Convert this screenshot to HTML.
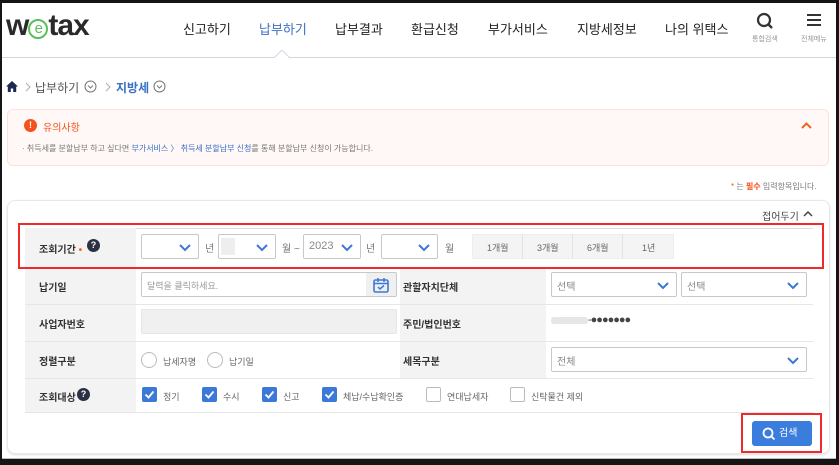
<!DOCTYPE html>
<html><head><meta charset="utf-8">
<style>
*{margin:0;padding:0;box-sizing:border-box}
body{width:839px;height:465px;background:#151515;position:relative;overflow:hidden;font-family:"Liberation Sans","Noto Sans CJK KR",sans-serif;color:#333}
.a{position:absolute}
#pg{left:2px;top:3px;width:834px;height:456px;background:#fff;border-bottom:1px solid #bbb}
.nav{font-size:13px;color:#222;top:19px;white-space:nowrap}
.t{white-space:nowrap}
.lbl{font-size:10px;font-weight:bold;color:#333}
.sel{border:1px solid #c8c8c8;border-radius:2px;background:#fff;height:25px}
.chev{position:absolute;right:7px;top:6px}
.unit{font-size:10px;color:#777}
.cbo{width:15px;height:15px;border:1px solid #bbb;border-radius:2px;background:#fff}
.ct{font-size:9px;color:#666}
</style></head><body>
<div id="pg" class="a"></div>
<div class="a t" style="left:6px;top:9px;font-size:30px;font-weight:bold;color:#2a2a2a;letter-spacing:-1px;font-family:'Liberation Sans',sans-serif">w<span style="display:inline-block;width:20px;height:20px;border:2.5px solid #58c15a;border-radius:50%;font-size:15px;color:#58c15a;text-align:center;line-height:15px;vertical-align:2px;font-weight:normal">e</span>tax</div>
<div class="a nav" style="left:183px">신고하기</div>
<div class="a nav" style="left:259px;color:#3a6fc4">납부하기</div>
<div class="a nav" style="left:335px">납부결과</div>
<div class="a nav" style="left:411px">환급신청</div>
<div class="a nav" style="left:488px">부가서비스</div>
<div class="a nav" style="left:577px">지방세정보</div>
<div class="a nav" style="left:665px">나의 위택스</div>
<svg class="a" style="left:756px;top:12px" width="18" height="18" viewBox="0 0 18 18"><circle cx="8" cy="8" r="6" fill="none" stroke="#333" stroke-width="2.2"/><path d="M12 12l4 4" stroke="#333" stroke-width="2.4"/></svg>
<div class="a t" style="left:752px;top:34px;font-size:7px;color:#999">통합검색</div>
<svg class="a" style="left:807px;top:13px" width="14" height="14" viewBox="0 0 14 14"><path d="M0 2h14M0 7h14M0 12h14" stroke="#333" stroke-width="2"/></svg>
<div class="a t" style="left:801px;top:34px;font-size:7px;color:#999">전체메뉴</div>
<div class="a" style="left:2px;top:57px;width:834px;height:1px;background:#d4d6e4"></div>
<svg class="a" style="left:274px;top:50px" width="16" height="9"><path d="M0 8L8 0L16 8" fill="#fff" stroke="#d4d6e4"/></svg>
<svg class="a" style="left:6px;top:81px" width="12" height="11" viewBox="0 0 12 11"><path d="M6 0L0 5.5h1.8V11h3V7.5h2.4V11h3V5.5H12z" fill="#1d2a4f"/></svg>
<svg class="a" style="left:25px;top:82px" width="6" height="10"><path d="M1 1l4 4-4 4" fill="none" stroke="#aaa"/></svg>
<div class="a t" style="left:35px;top:79px;font-size:12px;color:#555">납부하기</div>
<svg class="a" style="left:84px;top:80px" width="13" height="13"><circle cx="6.5" cy="6.5" r="5.5" fill="none" stroke="#777"/><path d="M4 5.5l2.5 2.5 2.5-2.5" fill="none" stroke="#777"/></svg>
<svg class="a" style="left:105px;top:82px" width="6" height="10"><path d="M1 1l4 4-4 4" fill="none" stroke="#aaa"/></svg>
<div class="a t" style="left:116px;top:79px;font-size:12px;color:#3a6fc4;font-weight:bold">지방세</div>
<svg class="a" style="left:153px;top:80px" width="13" height="13"><circle cx="6.5" cy="6.5" r="5.5" fill="none" stroke="#777"/><path d="M4 5.5l2.5 2.5 2.5-2.5" fill="none" stroke="#777"/></svg>
<div class="a" style="left:7px;top:109px;width:822px;height:57px;background:#fff8f6;border:1px solid #fbe3dc;border-radius:6px"></div>
<div class="a" style="left:24px;top:119px;width:13px;height:13px;border-radius:50%;background:#f4531e;color:#fff;font-size:9px;font-weight:bold;text-align:center;line-height:13px">!</div>
<div class="a t" style="left:43px;top:119px;font-size:10px;color:#f4531e">유의사항</div>
<svg class="a" style="left:801px;top:122px" width="11" height="7"><path d="M1 6l4.5-4.5L10 6" fill="none" stroke="#f4631e" stroke-width="2"/></svg>
<div class="a t" style="left:22px;top:143px;font-size:8px;color:#777">· 취득세를 분할납부 하고 싶다면 <span style="color:#3a6fc4">부가서비스 〉 취득세 분할납부 신청</span>를 통해 분할납부 신청이 가능합니다.</div>
<div class="a t" style="left:731px;top:181px;font-size:8px;color:#777"><span style="color:#f4531e">*</span> 는 <span style="color:#f4531e;font-weight:bold">필수</span> 입력항목입니다.</div>
<div class="a" style="left:7px;top:200px;width:823px;height:254px;border:1px solid #e8e8e8;border-radius:8px;box-shadow:0 1px 2px #ddd"></div>
<div class="a t" style="left:762px;top:208px;font-size:10px;color:#444">접어두기</div>
<svg class="a" style="left:803px;top:211px" width="10" height="6"><path d="M1 5l4-4 4 4" fill="none" stroke="#444" stroke-width="1.5"/></svg>
<div class="a" style="left:25px;top:228px;width:788px;height:185px;border-top:1px solid #ddd"></div>
<div class="a" style="left:25px;top:228px;width:111px;height:185px;background:#f3f3f3"></div>
<div class="a" style="left:400px;top:267px;width:146px;height:111px;background:#f3f3f3"></div>
<div class="a" style="left:25px;top:267px;width:788px;height:1px;background:#e6e6e6"></div>
<div class="a" style="left:25px;top:304px;width:788px;height:1px;background:#e6e6e6"></div>
<div class="a" style="left:25px;top:341px;width:788px;height:1px;background:#e6e6e6"></div>
<div class="a" style="left:25px;top:378px;width:788px;height:1px;background:#e6e6e6"></div>
<div class="a" style="left:25px;top:412px;width:788px;height:1px;background:#e6e6e6"></div>
<div class="a t lbl" style="left:39px;top:241px">조회기간 <span style="color:#f4631e">•</span></div>
<div class="a" style="left:87px;top:239px;width:13px;height:13px;border-radius:50%;background:#2b3142;color:#fff;font-size:9px;font-weight:bold;text-align:center;line-height:13px">?</div>
<div class="a t lbl" style="left:39px;top:279px">납기일</div>
<div class="a t lbl" style="left:39px;top:316px">사업자번호</div>
<div class="a t lbl" style="left:39px;top:353px">정렬구분</div>
<div class="a t lbl" style="left:39px;top:389px">조회대상</div>
<div class="a" style="left:77px;top:388px;width:13px;height:13px;border-radius:50%;background:#2b3142;color:#fff;font-size:9px;font-weight:bold;text-align:center;line-height:13px">?</div>
<div class="a t lbl" style="left:403px;top:279px">관할자치단체</div>
<div class="a t lbl" style="left:403px;top:316px">주민/법인번호</div>
<div class="a t lbl" style="left:403px;top:353px">세목구분</div>
<div class="a sel" style="left:141px;top:234px;width:58px"><svg class="chev" width="12" height="12"><path d="M1 4l5 5 5-5" fill="none" stroke="#3b78d8" stroke-width="2"/></svg></div>
<div class="a unit" style="left:205px;top:240px">년</div>
<div class="a sel" style="left:218px;top:234px;width:58px"><div class="a" style="left:2px;top:3px;width:14px;height:17px;background:#eee"></div><svg class="chev" width="12" height="12"><path d="M1 4l5 5 5-5" fill="none" stroke="#3b78d8" stroke-width="2"/></svg></div>
<div class="a unit t" style="left:282px;top:240px">월 ~</div>
<div class="a sel" style="left:303px;top:234px;width:58px"><span class="a" style="left:5px;top:5px;font-size:11px;color:#888">2023</span><svg class="chev" width="12" height="12"><path d="M1 4l5 5 5-5" fill="none" stroke="#3b78d8" stroke-width="2"/></svg></div>
<div class="a unit" style="left:366px;top:240px">년</div>
<div class="a sel" style="left:381px;top:234px;width:57px"><svg class="chev" width="12" height="12"><path d="M1 4l5 5 5-5" fill="none" stroke="#3b78d8" stroke-width="2"/></svg></div>
<div class="a unit" style="left:445px;top:240px">월</div>
<div class="a" style="left:472px;top:234px;width:202px;height:25px;background:#f4f4f4;border:1px solid #eee"></div>
<div class="a" style="left:522px;top:234px;width:1px;height:25px;background:#e3e3e3"></div>
<div class="a" style="left:572px;top:234px;width:1px;height:25px;background:#e3e3e3"></div>
<div class="a" style="left:622px;top:234px;width:1px;height:25px;background:#e3e3e3"></div>
<div class="a t ct" style="left:487px;top:241px">1개월</div>
<div class="a t ct" style="left:537px;top:241px">3개월</div>
<div class="a t ct" style="left:587px;top:241px">6개월</div>
<div class="a t ct" style="left:642px;top:241px">1년</div>
<div class="a sel" style="left:141px;top:272px;width:256px;overflow:hidden"><span class="a t" style="left:5px;top:6px;font-size:9px;color:#999">달력을 클릭하세요.</span><div class="a" style="right:0;top:0;width:30px;height:25px;background:#f0f0f0"></div>
<svg class="a" style="right:7px;top:4px" width="16" height="16" viewBox="0 0 16 16"><rect x="1" y="3" width="14" height="12" rx="1.5" fill="none" stroke="#3b78d8" stroke-width="1.6"/><path d="M1 6.5h14M5 1v4M11 1v4M5 10l2 2 4-3.5" fill="none" stroke="#3b78d8" stroke-width="1.5"/></svg></div>
<div class="a sel" style="left:551px;top:272px;width:126px"><span class="a" style="left:5px;top:5px;font-size:10px;color:#888">선택</span><svg class="chev" width="12" height="12"><path d="M1 4l5 5 5-5" fill="none" stroke="#3b78d8" stroke-width="2"/></svg></div>
<div class="a sel" style="left:681px;top:272px;width:126px"><span class="a" style="left:5px;top:5px;font-size:10px;color:#888">선택</span><svg class="chev" width="12" height="12"><path d="M1 4l5 5 5-5" fill="none" stroke="#3b78d8" stroke-width="2"/></svg></div>
<div class="a" style="left:141px;top:309px;width:256px;height:25px;background:#f0f0f0;border:1px solid #e6e6e6;border-radius:2px"></div>
<div class="a" style="left:551px;top:317px;width:37px;height:7px;background:#e6e6e6;border-radius:3px"></div>
<div class="a t" style="left:588px;top:314px;font-size:11px;color:#444;letter-spacing:-1px">-●●●●●●●</div>
<div class="a" style="left:141px;top:352px;width:16px;height:16px;border:1px solid #bbb;border-radius:50%"></div>
<div class="a t ct" style="left:163px;top:355px">납세자명</div>
<div class="a" style="left:207px;top:352px;width:16px;height:16px;border:1px solid #bbb;border-radius:50%"></div>
<div class="a t ct" style="left:229px;top:355px">납기일</div>
<div class="a sel" style="left:551px;top:347px;width:256px"><span class="a" style="left:5px;top:5px;font-size:10px;color:#888">전체</span><svg class="chev" width="12" height="12"><path d="M1 4l5 5 5-5" fill="none" stroke="#3b78d8" stroke-width="2"/></svg></div>
<svg class="a" style="left:142px;top:387px" width="15" height="15"><rect width="15" height="15" rx="2" fill="#3b78d8"/><path d="M3.5 7.5l3 3 5-6" fill="none" stroke="#fff" stroke-width="1.8"/></svg>
<div class="a t ct" style="left:163px;top:390px">정기</div>
<svg class="a" style="left:202px;top:387px" width="15" height="15"><rect width="15" height="15" rx="2" fill="#3b78d8"/><path d="M3.5 7.5l3 3 5-6" fill="none" stroke="#fff" stroke-width="1.8"/></svg>
<div class="a t ct" style="left:223px;top:390px">수시</div>
<svg class="a" style="left:262px;top:387px" width="15" height="15"><rect width="15" height="15" rx="2" fill="#3b78d8"/><path d="M3.5 7.5l3 3 5-6" fill="none" stroke="#fff" stroke-width="1.8"/></svg>
<div class="a t ct" style="left:283px;top:390px">신고</div>
<svg class="a" style="left:322px;top:387px" width="15" height="15"><rect width="15" height="15" rx="2" fill="#3b78d8"/><path d="M3.5 7.5l3 3 5-6" fill="none" stroke="#fff" stroke-width="1.8"/></svg>
<div class="a t ct" style="left:343px;top:390px">체납/수납확인증</div>
<div class="a cbo" style="left:426px;top:387px"></div>
<div class="a t ct" style="left:447px;top:390px">연대납세자</div>
<div class="a cbo" style="left:510px;top:387px"></div>
<div class="a t ct" style="left:531px;top:390px">신탁물건 제외</div>
<div class="a" style="left:752px;top:421px;width:60px;height:25px;background:#3a7ddc;border-radius:3px;color:#fff;font-size:10px;line-height:25px;padding-left:27px">검색</div>
<svg class="a" style="left:762px;top:427px" width="14" height="14"><circle cx="6" cy="6" r="4.5" fill="none" stroke="#fff" stroke-width="1.8"/><path d="M9.5 9.5l3 3" stroke="#fff" stroke-width="1.8"/></svg>
<div class="a" style="left:18px;top:223px;width:806px;height:46px;border:2px solid #ee2a2a"></div>
<div class="a" style="left:741px;top:413px;width:81px;height:40px;border:2px solid #ee2a2a"></div>
</body></html>
